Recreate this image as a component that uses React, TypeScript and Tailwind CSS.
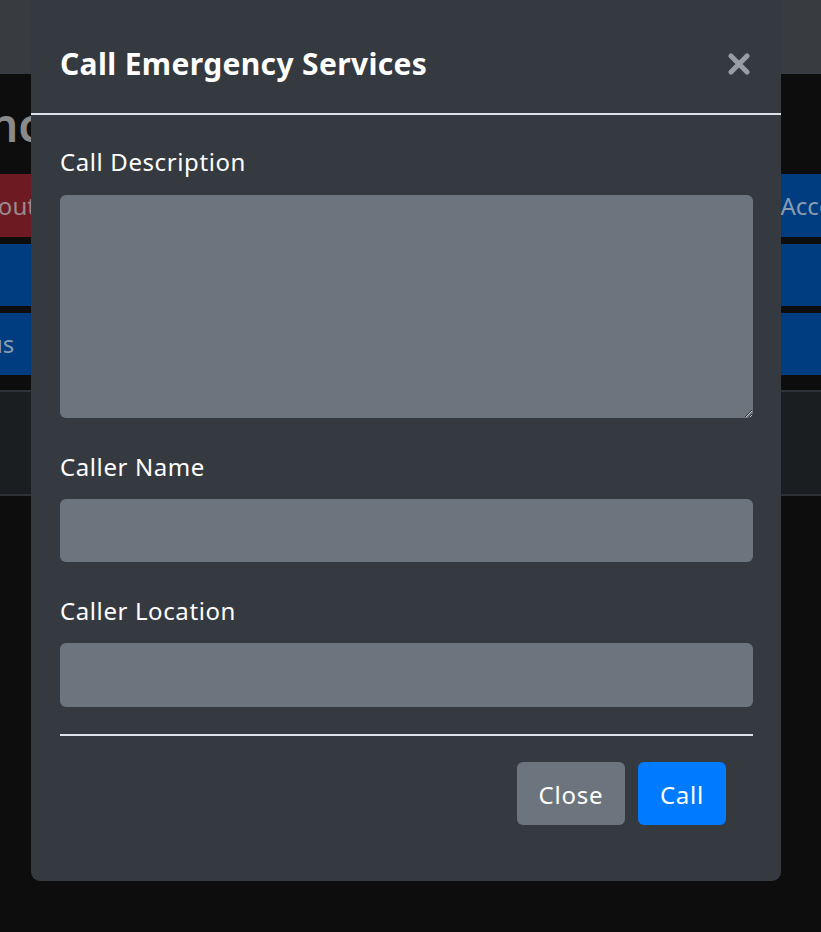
import { useState } from "react";

const FONT = "font-['Noto_Sans','Open_Sans',sans-serif]";

function BackgroundPage() {
  return (
    <div className="flex min-h-[932px] flex-col bg-[#0d0d0d]">
      <div className="h-[74px] bg-[#383c41]" />
      <div className="flex h-[100px] items-center overflow-hidden">
        <h1 className="-ml-[28px] whitespace-nowrap text-[46px] font-semibold text-[#8a8a8a]">
          Incident Board
        </h1>
      </div>
      <div className="flex flex-col gap-[7px]">
        <div className="grid grid-cols-2 gap-[10px]">
          <div className="flex h-[63px] items-center overflow-hidden bg-[#6e1a22] text-[24px] text-[#9a8c8e]">
            <span className="-ml-[44px]">Logout</span>
          </div>
          <div className="flex h-[63px] items-center overflow-hidden bg-[#003d80] text-[24px] text-[#8a9bb0]">
            <span className="ml-[365px] whitespace-nowrap">Account</span>
          </div>
        </div>
        <div className="h-[62px] bg-[#003d80]" />
        <div className="flex h-[62px] items-center overflow-hidden bg-[#003d80] text-[24px] text-[#8a9bb0]">
          <span className="-ml-[12px]">us</span>
        </div>
      </div>
      <div className="mt-[15px] h-[106px] border-y-2 border-[#2e3236] bg-[#1b1e21]" />
    </div>
  );
}

export default function App() {
  const [description, setDescription] = useState("");
  const [name, setName] = useState("");
  const [location, setLocation] = useState("");

  return (
    <div className={`relative h-[932px] w-[821px] overflow-hidden ${FONT}`}>
      <BackgroundPage />

      <div className="absolute left-[31px] top-0 w-[750px] rounded-b-[9px] bg-[#343a40] text-white">
        <div className="flex items-center justify-between border-b-2 border-[#dee2e6] pb-[27px] pl-[29px] pr-[31px] pt-[41px]">
          <h5 className="text-[30px] font-bold leading-[45px] tracking-[0.35px]">Call Emergency Services</h5>
          <button type="button" aria-label="Close" className="text-[#9a9ea2]">
            <svg width="22" height="22" viewBox="0 0 22 22">
              <path
                d="M3 3 L19 19 M19 3 L3 19"
                stroke="currentColor"
                strokeWidth="5"
                strokeLinecap="round"
              />
            </svg>
          </button>
        </div>

        <div className="pl-[29px] pr-[28px] pt-[29px] tracking-[0.6px]">
          <div className="mb-[31px]">
            <label className="mb-[15px] block text-[24px] leading-[36px]">Call Description</label>
            <textarea
              value={description}
              onChange={(e) => setDescription(e.target.value)}
              className="block h-[223px] w-full rounded-[6px] bg-[#6c757d] px-[18px] py-[9px] text-[24px] text-white outline-none"
            />
          </div>
          <div className="mb-[31px]">
            <label className="mb-[14px] block text-[24px] leading-[36px]">Caller Name</label>
            <input
              value={name}
              onChange={(e) => setName(e.target.value)}
              className="block h-[63px] w-full rounded-[6px] bg-[#6c757d] px-[18px] text-[24px] text-white outline-none"
            />
          </div>
          <div className="mb-[27px]">
            <label className="mb-[14px] block text-[24px] leading-[36px]">Caller Location</label>
            <input
              value={location}
              onChange={(e) => setLocation(e.target.value)}
              className="block h-[64px] w-full rounded-[6px] bg-[#6c757d] px-[18px] text-[24px] text-white outline-none"
            />
          </div>

          <div className="flex justify-end gap-[13px] border-t-2 border-[#dee2e6] pb-[56px] pr-[27px] pt-[26px]">
            <button type="button" className="h-[63px] w-[108px] rounded-[6px] bg-[#6c757d] pt-[3px] text-[24px] tracking-[0.8px]">
              Close
            </button>
            <button type="button" className="h-[63px] w-[88px] rounded-[6px] bg-[#007bff] pt-[3px] text-[24px] tracking-[0.8px]">
              Call
            </button>
          </div>
        </div>
      </div>
    </div>
  );
}
